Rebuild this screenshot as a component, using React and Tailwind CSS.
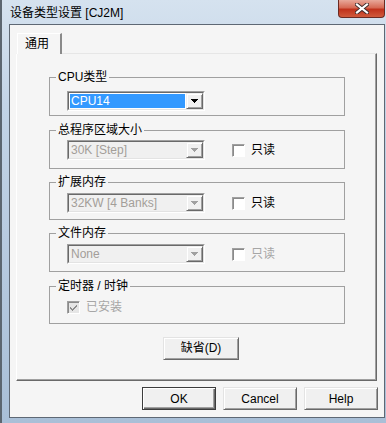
import React from "react";

const FONT = "font-['Liberation_Sans','Noto_Sans_CJK_SC',sans-serif]";

// classic 7x4 dropdown triangle
const Arrow = ({ color = "#000" }) => (
  <svg width="7" height="4" viewBox="0 0 7 4" shapeRendering="crispEdges">
    <rect x="0" y="0" width="7" height="1" fill={color} />
    <rect x="1" y="1" width="5" height="1" fill={color} />
    <rect x="2" y="2" width="3" height="1" fill={color} />
    <rect x="3" y="3" width="1" height="1" fill={color} />
  </svg>
);

const Combo = ({ value, disabled }) => (
  <div className="w-[138px] h-[20px] border border-t-[#a0a0a0] border-l-[#a0a0a0] border-r-white border-b-white">
    <div
      className={
        disabled
          ? "flex h-full border border-t-[#696969] border-l-[#696969] border-r-[#e3e3e3] border-b-[#e3e3e3] bg-[#f0f0f0]"
          : "flex h-full border border-t-[#696969] border-l-[#696969] border-r-[#e3e3e3] border-b-[#e3e3e3] bg-white"
      }
    >
      <div className="flex-1 min-w-0 p-[1px]">
        <div
          className={
            disabled
              ? "h-full flex items-center pl-[1px] text-[12px] leading-[14px] text-[#a39e99]"
              : "h-full flex items-center pl-[1px] text-[12px] leading-[14px] text-white bg-[#3399ff]"
          }
        >
          {value}
        </div>
      </div>
      <div className="w-[17px] h-full flex items-center justify-center bg-[#f0f0f0] border border-t-[#f0f0f0] border-l-[#f0f0f0] border-r-[#696969] border-b-[#696969] shadow-[inset_1px_1px_0_#fff,inset_-1px_-1px_0_#a0a0a0]">
        <Arrow color={disabled ? "#a0a0a0" : "#000"} />
      </div>
    </div>
  </div>
);

const Check = ({ label, disabled, checked }) => (
  <div className="flex items-center gap-[6px]">
    <div
      className={
        checked
          ? "w-[13px] h-[13px] flex items-center justify-center border border-t-[#a0a0a0] border-l-[#a0a0a0] border-r-white border-b-white bg-[#e6e6e6] shadow-[inset_1px_1px_0_#8a8a8a]"
          : "w-[13px] h-[13px] border border-t-[#a0a0a0] border-l-[#a0a0a0] border-r-white border-b-white bg-white shadow-[inset_1px_1px_0_#8a8a8a]"
      }
    >
      {checked && (
        <svg width="9" height="9" viewBox="0 0 9 9" shapeRendering="crispEdges">
          <path d="M1 4h1v1h1v1h1v-1h1v-1h1v-1h1v-1h1v2h-1v1h-1v1h-1v1h-1v1h-1v-1h-1v-1h-1z" fill="#8d8d8d" />
        </svg>
      )}
    </div>
    <span
      className={
        disabled
          ? "text-[12px] leading-[14px] text-[#a6a6a6]"
          : "text-[12px] leading-[14px] text-black"
      }
    >
      {label}
    </span>
  </div>
);

const Group = ({ title, className, children }) => (
  <div className={`relative w-[296px] border border-[#a0a0a0] ${className}`}>
    <span className="absolute -top-[8px] left-[6px] px-[2px] bg-[#f5f5f5] text-[12px] leading-[14px] text-black">
      {title}
    </span>
    {children}
  </div>
);

const Button = ({ children, isDefault, className = "" }) => (
  <button
    type="button"
    className={
      isDefault
        ? `w-[74px] h-[23px] bg-[#f0f0f0] border border-[#3c3c3c] shadow-[inset_1px_1px_0_#fff,inset_-1px_-1px_0_#696969,inset_-2px_-2px_0_#a0a0a0] text-[12px] leading-[14px] text-black ${className}`
        : `w-[74px] h-[23px] bg-[#f0f0f0] border border-t-[#e3e3e3] border-l-[#e3e3e3] border-r-[#696969] border-b-[#696969] shadow-[inset_1px_1px_0_#fff,inset_-1px_-1px_0_#a0a0a0] text-[12px] leading-[14px] text-black ${className}`
    }
  >
    {children}
  </button>
);

export default function App() {
  return (
    <div
      className={`w-[386px] h-[423px] flex flex-col border-l-2 border-l-[#5c6670] bg-[linear-gradient(180deg,#d5e2ef_0%,#c2d3e6_25%,#a9bfd7_100%)] ${FONT}`}
    >
      {/* Title bar */}
      <div className="h-[24px] flex justify-between">
        <div className="pl-[8px] pt-[6px] text-[12px] leading-[15px] text-black">
          设备类型设置 [CJ2M]
        </div>
        <div className="w-[47px] h-[18px] mr-[1px] flex items-center justify-center rounded-b-[4px] border border-t-0 border-[#6b2a22] bg-[linear-gradient(180deg,#e8a89a_0%,#d66a55_45%,#c0321c_55%,#d05a3c_100%)]">
          <svg width="14" height="11" viewBox="0 0 14 11">
            <path d="M2 1.5 L12 9.5 M12 1.5 L2 9.5" stroke="#3d2a2a" strokeWidth="4" strokeLinecap="square" />
            <path d="M2 1.5 L12 9.5 M12 1.5 L2 9.5" stroke="#fff" strokeWidth="2.2" strokeLinecap="square" />
          </svg>
        </div>
      </div>

      {/* Client area */}
      <div className="ml-[7px] mr-[1px] h-[394px] border border-[#5e6874] bg-[#f5f5f5] flex flex-col pt-[8px]">
        {/* Tab */}
        <div className="pl-[7px] relative z-10 -mb-[1px]">
          <div className="w-[45px] h-[21px] bg-[#f5f5f5] border-t border-l border-t-white border-l-white border-r-2 border-r-[#8a8a8a] flex items-center pl-[7px] text-[12px] leading-[14px] text-black">
            通用
          </div>
        </div>

        {/* Tab panel */}
        <div className="ml-[6px] w-[361px] h-[328px] border border-t-[#e6e6e6] border-l-white border-r-[#696969] border-b-[#696969] shadow-[inset_-1px_-1px_0_#a0a0a0] flex flex-col pl-[32px]">
          <Group title="CPU类型" className="mt-[23px] h-[39px] pl-[17px] pt-[13px]">
            <Combo value="CPU14" />
          </Group>

          <Group title="总程序区域大小" className="mt-[14px] h-[39px] pl-[17px] pt-[9px]">
            <div className="flex items-center gap-[27px]">
              <Combo value="30K [Step]" disabled />
              <Check label="只读" />
            </div>
          </Group>

          <Group title="扩展内存" className="mt-[13px] h-[38px] pl-[17px] pt-[10px]">
            <div className="flex items-center gap-[27px]">
              <Combo value="32KW [4 Banks]" disabled />
              <Check label="只读" />
            </div>
          </Group>

          <Group title="文件内存" className="mt-[13px] h-[39px] pl-[17px] pt-[10px]">
            <div className="flex items-center gap-[27px]">
              <Combo value="None" disabled />
              <Check label="只读" disabled />
            </div>
          </Group>

          <Group title="定时器 / 时钟" className="mt-[14px] h-[38px] pl-[17px] pt-[13px]">
            <Check label="已安装" disabled checked />
          </Group>

          <div className="mt-[11px] pl-[114px]">
            <Button className="w-[76px]">缺省(D)</Button>
          </div>
        </div>

        {/* Dialog buttons */}
        <div className="mt-[6px] flex justify-end gap-[7px] pr-[6px]">
          <Button isDefault>OK</Button>
          <Button>Cancel</Button>
          <Button>Help</Button>
        </div>
      </div>
    </div>
  );
}
